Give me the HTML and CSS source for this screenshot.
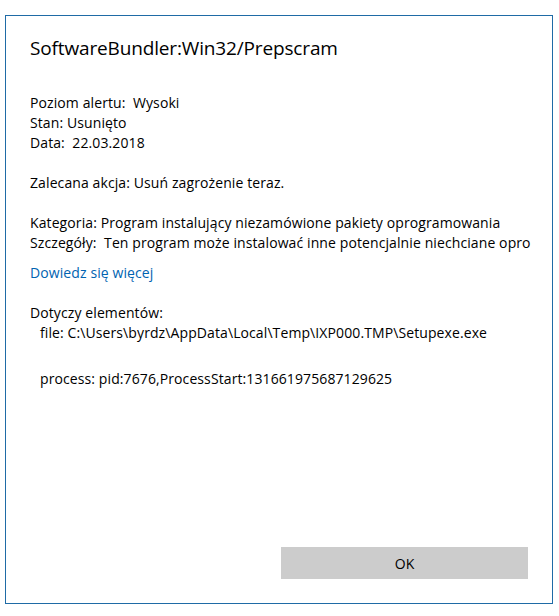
FILE: index.html
```html
<!DOCTYPE html>
<html lang="pl">
<head>
    <meta charset="UTF-8">
    <meta name="viewport" content="width=device-width, initial-scale=1.0">
    <title>SoftwareBundler:Win32/Prepscram</title>
    <link rel="stylesheet" href="styles.css">
</head>
<body>
    <div class="dialog">
        <div class="dialog-content">
            <h1 class="threat-title">SoftwareBundler:Win32/Prepscram</h1>

            <div class="info-group info-first">
                <p>Poziom alertu:&nbsp; Wysoki</p>
                <p>Stan: Usunięto</p>
                <p>Data:&nbsp; 22.03.2018</p>
            </div>

            <div class="info-group">
                <p>Zalecana akcja: Usuń zagrożenie teraz.</p>
            </div>

            <div class="info-group">
                <p>Kategoria: Program instalujący niezamówione pakiety oprogramowania</p>
                <p>Szczegóły:&nbsp; Ten program może instalować inne potencjalnie niechciane opro</p>
            </div>

            <a href="#" class="learn-more">Dowiedz się więcej</a>

            <div class="info-group items">
                <p>Dotyczy elementów:</p>
                <p class="item">file: C:\Users\byrdz\AppData\Local\Temp\IXP000.TMP\Setupexe.exe</p>
                <p class="item item-process">process: pid:7676,ProcessStart:131661975687129625</p>
            </div>
        </div>

        <div class="dialog-footer">
            <button class="ok-button">OK</button>
        </div>
    </div>
</body>
</html>
```

FILE: styles.css
```css
body {
    margin: 0;
    padding: 15px 0 0 5px;
    background: #fff;
    font-family: "Open Sans", Arial, sans-serif;
    color: #000;
}
.dialog {
    box-sizing: border-box;
    width: 548px;
    height: 589px;
    border: 1px solid #1f6ba6;
    display: flex;
    flex-direction: column;
}
.dialog-content {
    flex: 1;
    padding: 18px 24px 0 24px;
    overflow: hidden;
}
.threat-title {
    margin: 0;
    font-size: 19px;
    letter-spacing: -0.15px;
    font-weight: normal;
    line-height: 28px;
}
.info-group {
    margin-top: 20px;
    font-size: 14px;
    letter-spacing: 0.1px;
}
.info-first {
    margin-top: 31px;
}
.info-group p {
    margin: 0;
    line-height: 20px;
    white-space: nowrap;
}
.learn-more {
    display: block;
    margin-top: 10px;
    font-size: 14px;
    letter-spacing: 0.1px;
    line-height: 20px;
    color: #0063b1;
    text-decoration: none;
}
.items {
    margin-top: 20px;
}
.item {
    padding-left: 10px;
}
.item-process {
    margin-top: 26px !important;
}
.dialog-footer {
    display: flex;
    justify-content: flex-end;
    padding: 0 24px 24px 0;
}
.ok-button {
    width: 247px;
    height: 32px;
    border: none;
    background: #cccccc;
    font-family: "Open Sans", Arial, sans-serif;
    font-size: 14px;
    color: #000;
    padding: 0;
}
```
